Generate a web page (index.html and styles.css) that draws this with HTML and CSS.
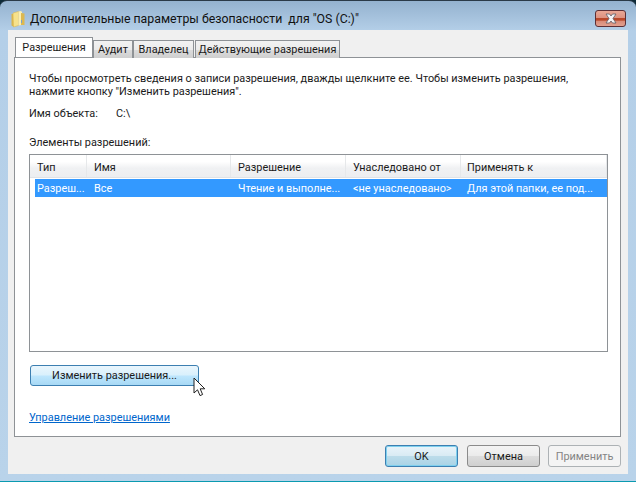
FILE: index.html
```html
<!DOCTYPE html>
<html lang="ru">
<head>
    <meta charset="UTF-8">
    <title>Дополнительные параметры безопасности</title>
    <link rel="stylesheet" href="styles.css">
</head>
<body>
    <div class="window">
        <div class="titlebar">
            <svg class="folder-icon" width="14" height="18" viewBox="0 0 14 18">
                <path d="M0.5 4 L0.5 15.5 L3 17 L3 4 Z" fill="#d9b650"/>
                <path d="M2 3 L7.5 1.5 L7.5 15.5 L2.5 17 Z" fill="#f6e28c" stroke="#d9b44a" stroke-width="0.5"/>
                <path d="M7.5 1.5 L10 1 L11 2 L11 15 L7.5 15.5 Z" fill="#fbeeb0"/>
                <path d="M10 3 L13.5 3.5 L13.5 15 L10 15 Z" fill="#dcb850"/>
                <rect x="10" y="10" width="1" height="3" fill="#7ba3c9"/>
            </svg>
            <span class="title-text">Дополнительные параметры безопасности  для "OS (C:)"</span>
            <div class="close-btn">
                <svg width="18" height="11" viewBox="0 0 18 11">
                    <path d="M4 1 H7.5 L9 3 L10.5 1 H14 L11 5.5 L14 10 H10.5 L9 8 L7.5 10 H4 L7 5.5 Z" fill="#f4f4f6" stroke="#5a5a66" stroke-width="0.8"/>
                </svg>
            </div>
        </div>
        <div class="client">
            <div class="tabs">
                <div class="tab active tab-perm">Разрешения</div>
                <div class="tab tab-audit">Аудит</div>
                <div class="tab tab-owner">Владелец</div>
                <div class="tab tab-eff">Действующие разрешения</div>
            </div>
            <div class="panel">
                <p class="intro">Чтобы просмотреть сведения о записи разрешения, дважды щелкните ее. Чтобы изменить разрешения, нажмите кнопку "Изменить разрешения".</p>
                <div class="object-row"><span class="object-label">Имя объекта:</span><span>C:\</span></div>
                <div class="list-label">Элементы разрешений:</div>
                <div class="list">
                    <div class="list-row list-head">
                        <div class="col-type">Тип</div>
                        <div class="col-name">Имя</div>
                        <div class="col-perm">Разрешение</div>
                        <div class="col-inh">Унаследовано от</div>
                        <div class="col-apply">Применять к</div>
                    </div>
                    <div class="list-row selected">
                        <div class="col-type">Разреш...</div>
                        <div class="col-name">Все</div>
                        <div class="col-perm">Чтение и выполне...</div>
                        <div class="col-inh">&lt;не унаследовано&gt;</div>
                        <div class="col-apply">Для этой папки, ее под...</div>
                    </div>
                </div>
                <div class="change-wrap">
                    <div class="btn change-btn">Изменить разрешения...</div>
                    <svg class="cursor" width="14" height="21" viewBox="0 0 14 21">
                        <path d="M1 1 V16 L4.5 12.8 L7 18.6 L9.6 17.5 L7.2 11.8 H11.8 Z" fill="#fff" stroke="#222" stroke-width="1"/>
                    </svg>
                </div>
                <a class="manage-link">Управление разрешениями</a>
            </div>
            <div class="footer">
                <div class="btn btn-ok">OK</div>
                <div class="btn btn-cancel">Отмена</div>
                <div class="btn btn-disabled">Применить</div>
            </div>
        </div>
    </div>
</body>
</html>
```

FILE: styles.css
```css
html, body {
    margin: 0;
    padding: 0;
}

body {
    width: 636px;
    height: 482px;
    overflow: hidden;
    background-color: #0d2a38;
    font-family: Roboto, "Noto Sans", sans-serif;
    font-size: 10.9px;
    color: #1a1a1a;
}

.window {
    box-sizing: border-box;
    width: 636px;
    height: 482px;
    padding: 0 8px 7px;
    border-radius: 7px 7px 0 0;
    border-top: 1px solid #2a3a48;
    background: linear-gradient(180deg, #94b2cf 0, #b4cfe8 30px, #b9d3ea 100%);
    border-bottom: 1px solid #0a9ab0;
    display: flex;
    flex-direction: column;
}

.titlebar {
    box-sizing: border-box;
    height: 29px;
    padding-top: 7px;
    flex: none;
    display: flex;
    align-items: center;
    position: relative;
}

.folder-icon {
    margin: 0 5px 0 3px;
}

.title-text {
    font-size: 12.3px;
    color: #111;
    white-space: pre;
}

.close-btn {
    position: absolute;
    right: 2px;
    top: 9px;
    box-sizing: border-box;
    width: 31px;
    height: 17px;
    border: 1px solid #5c2f35;
    border-radius: 3px;
    background: linear-gradient(180deg, #e9a795 0, #dc9180 48%, #b9482a 50%, #b9482a 62%, #d98b78 66%, #e2a08f 100%);
    display: flex;
    align-items: center;
    justify-content: center;
}

.client {
    flex: 1;
    background-color: #f0f0f0;
    padding: 9px 7px 0 6px;
    display: flex;
    flex-direction: column;
}

.tabs {
    display: flex;
    height: 18px;
    padding-left: 1px;
    position: relative;
    z-index: 1;
}

.tab {
    box-sizing: border-box;
    height: 18px;
    margin-top: 1px;
    padding-top: 1px;
    text-align: center;
    border: 1px solid #8e9296;
    border-bottom: none;
    background: linear-gradient(180deg, #f2f2f2 0, #ebebeb 50%, #dcdcdc 51%, #cfcfcf 100%);
    line-height: 15px;
    white-space: nowrap;
}

.tab-perm { width: 78px; }
.tab-audit { width: 40px; }
.tab-owner { width: 61px; }
.tab-eff { width: 145px; margin-left: 1px; }

.tab.active {
    height: 20px;
    margin-top: -2px;
    padding-top: 2px;
    background: #fff;
}

.panel {
    box-sizing: border-box;
    height: 380px;
    border: 1px solid #8e9296;
    background-color: #fff;
    padding: 14px 14px 0;
    display: flex;
    flex-direction: column;
}

.intro {
    margin: 0;
    line-height: 13px;
    width: 570px;
}

.object-row {
    margin-top: 9px;
    height: 14px;
    line-height: 14px;
    display: flex;
}

.object-label {
    width: 87px;
}

.list-label {
    margin-top: 15px;
    height: 14px;
    line-height: 14px;
}

.list {
    box-sizing: border-box;
    margin: 4px 0 0 0;
    width: 579px;
    height: 198px;
    border: 1px solid #8e9296;
    background-color: #fff;
}

.list-row {
    display: flex;
    white-space: nowrap;
}

.list-head {
    height: 23px;
    line-height: 25px;
    background: linear-gradient(180deg, #fff 0, #fff 30%, #f0f1f3 60%, #eceef0 100%);
    border-bottom: 1px solid #dfe2e6;
    box-sizing: border-box;
}

.list-head > div {
    border-right: 1px solid #e6e8ea;
}

.selected {
    height: 18px;
    line-height: 19px;
    margin: 1px 0 0 5px;
    background-color: #3399ff;
    color: #fff;
}

.list-row > div {
    box-sizing: border-box;
    padding-left: 7px;
}

.selected > div {
    padding-left: 2px;
}

.list-row > .col-apply {
    padding-left: 6px;
}

.selected > .col-apply {
    padding-left: 1px;
}

.col-type { width: 57px; }
.col-name { width: 144px; }
.col-perm { width: 115px; }
.col-inh { width: 115px; }
.col-apply { flex: 1; }

.btn {
    box-sizing: border-box;
    height: 21px;
    padding-top: 1px;
    border: 1px solid #8b8b8b;
    border-radius: 3px;
    background: linear-gradient(180deg, #f4f4f4 0, #ebebeb 48%, #dcdcdc 52%, #cfcfcf 100%);
    display: flex;
    align-items: center;
    justify-content: center;
    line-height: 1;
}

.change-wrap {
    position: relative;
    margin: 13px 0 0 1px;
    width: 169px;
}

.change-btn {
    width: 169px;
    border-color: #3c7fb1;
    background: linear-gradient(180deg, #eaf6fd 0, #d9f0fc 48%, #bee6fd 52%, #a7d9f5 100%);
}

.cursor {
    position: absolute;
    left: 163px;
    top: 12px;
}

.manage-link {
    margin-top: 25px;
    color: #0066cc;
    text-decoration: underline;
    line-height: 14px;
}

.footer {
    display: flex;
    justify-content: flex-end;
    gap: 8px;
    padding-top: 8px;
}

.footer .btn {
    width: 73px;
    height: 22px;
    padding-top: 2px;
}

.btn-ok {
    margin-right: 1px;
    border-color: #3c7fb1;
    box-shadow: inset 0 0 0 1px #7fd0ee;
    background: linear-gradient(180deg, #e9f4fa 0, #d9ebf4 48%, #bcdcea 52%, #a9d3e6 100%);
}

.btn-disabled {
    border-color: #adb2b5;
    background: #f4f4f4;
    color: #848484;
}
```
